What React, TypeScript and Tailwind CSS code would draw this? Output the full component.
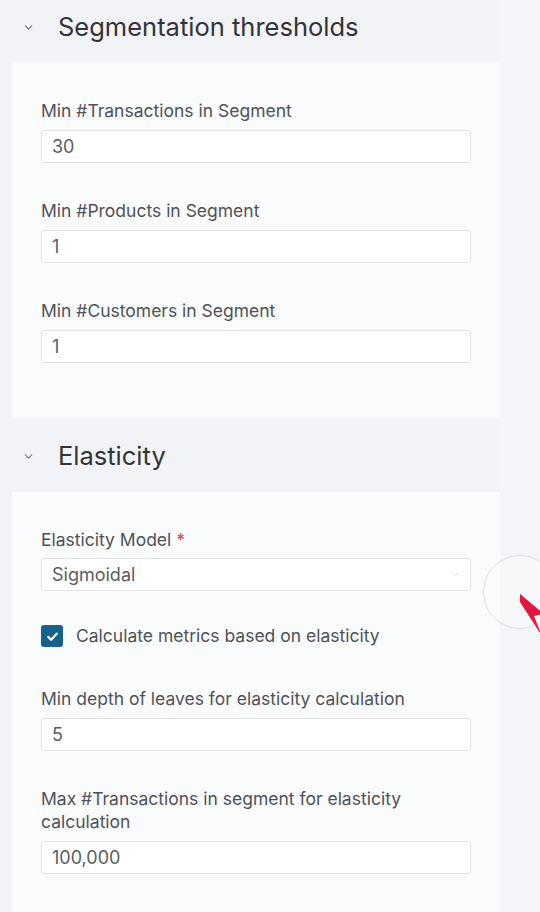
import { ChevronDown } from "lucide-react";

function Field({ label, value }: { label: React.ReactNode; value: string }) {
  return (
    <div className="flex flex-col">
      <label className="text-[17.5px] leading-[23px] text-[#4f5258] mb-[8px] w-[430px]">{label}</label>
      <div className="h-[33px] w-[430px] border border-[#e1e3e8] rounded-[3px] bg-white flex items-center px-[10px] text-[18px] text-[#5a5d63]">
        {value}
      </div>
    </div>
  );
}

function SectionHeader({ title, className }: { title: string; className: string }) {
  return (
    <div className={"flex items-center pl-[22px] " + className}>
      <ChevronDown className="w-[13px] h-[13px] text-[#777]" strokeWidth={2} />
      <span className="ml-[23px] text-[25.5px] text-[#333438]">{title}</span>
    </div>
  );
}

export default function App() {
  return (
    <div className="w-[540px] h-[912px] overflow-hidden bg-[#f2f3f6] flex font-['Inter',sans-serif] relative">
      <div className="w-[500px] flex flex-col">
        <SectionHeader title="Segmentation thresholds" className="h-[62px] pb-[8px]" />
        <div className="ml-[12px] w-[488px] h-[356px] bg-[#fafbfc] pl-[29px] pt-[37px] flex flex-col gap-[36px]">
          <Field label="Min #Transactions in Segment" value="30" />
          <Field label="Min #Products in Segment" value="1" />
          <Field label="Min #Customers in Segment" value="1" />
        </div>
        <SectionHeader title="Elasticity" className="h-[74px] pt-[2px]" />
        <div className="ml-[12px] w-[488px] flex-1 bg-[#fafbfc] pl-[29px] pt-[36px] flex flex-col">
          <div className="flex flex-col">
            <label className="text-[17.5px] leading-[23px] text-[#4f5258] mb-[7px]">
              Elasticity Model<span className="text-[#e0474c]"> *</span>
            </label>
            <div className="h-[33px] w-[430px] border border-[#e1e3e8] rounded-[3px] bg-white flex items-center justify-between px-[10px] text-[18px] text-[#5a5d63]">
              <span>Sigmoidal</span>
              <ChevronDown className="w-[9px] h-[9px] text-[#ccc]" />
            </div>
          </div>
          <div className="flex items-center mt-[32px]">
            <div className="w-[22px] h-[22px] rounded-[3px] bg-[#17628a] flex items-center justify-center">
              <svg viewBox="0 0 16 16" className="w-[15px] h-[15px]" fill="none" stroke="white" strokeWidth={2.4} strokeLinecap="round" strokeLinejoin="round">
                <path d="M3.5 8.5l3 3 6-6.5" />
              </svg>
            </div>
            <span className="ml-[13px] text-[17.5px] text-[#4f5258]">Calculate metrics based on elasticity</span>
          </div>
          <div className="mt-[38px] flex flex-col gap-[36px]">
            <Field label="Min depth of leaves for elasticity calculation" value="5" />
            <Field label="Max #Transactions in segment for elasticity calculation" value="100,000" />
          </div>
        </div>
      </div>
      <div className="flex-1 bg-[#f4f5f8]" />
      {/* cursor highlight */}
      <div className="absolute left-[483px] top-[555px] w-[74px] h-[74px] rounded-full border border-[#dcdde0] bg-white/30" />
      <svg className="absolute left-[518px] top-[592px]" width="28" height="48" viewBox="0 0 28 48">
        <path d="M2 2 L26 22 L16 24 L24 44 L2 10 Z" fill="#e3173d" />
      </svg>
    </div>
  );
}
